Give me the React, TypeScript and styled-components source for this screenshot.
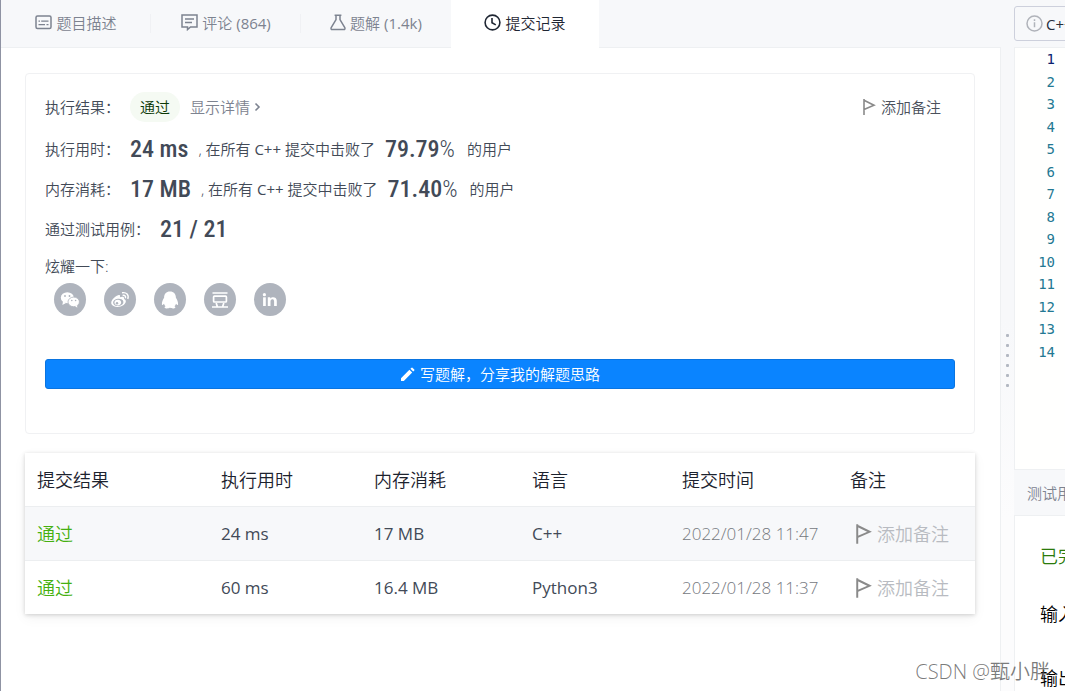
import React from "react";
import styled, { createGlobalStyle } from "styled-components";

const GlobalStyle = createGlobalStyle`
  * { box-sizing: border-box; }
  body {
    margin: 0;
    background: #fff;
    color: #424a57;
    font-family: "Open Sans", "Noto Sans CJK SC", sans-serif;
    font-weight: 350;
    font-size: 15px;
    line-height: 24px;
  }
  button { font: inherit; color: inherit; background: none; border: 0; padding: 0; cursor: pointer; }
  a { color: inherit; text-decoration: none; }
  svg { display: block; flex: none; }
`;

const Page = styled.div`
  position: relative;
  display: flex;
  min-height: 100vh;
  overflow: hidden;
  border-left: 1px solid #8f93a3;
`;

const Main = styled.main`
  flex: 1;
  min-width: 0;
  border-right: 1px solid #eef0f2;
`;

const TabBar = styled.nav`
  display: flex;
  height: 48px;
  margin-right: -1px;
  background: #f7f8fa;
`;

const Tab = styled.button<{ $active?: boolean }>`
  position: relative;
  display: flex;
  align-items: center;
  justify-content: center;
  gap: 4px;
  width: ${(p) => (p.$active ? 148 : 150)}px;
  padding-bottom: 2px;
  color: ${(p) => (p.$active ? "#1f2633" : "#7d8390")};
  background: ${(p) => (p.$active ? "#fff" : "transparent")};
  border-bottom: 1px solid ${(p) => (p.$active ? "#fff" : "#eef0f2")};
`;

const TabDivider = styled.span`
  position: absolute;
  right: 0;
  top: 14px;
  width: 1px;
  height: 19px;
  background: #f0f1f4;
`;

const TabFill = styled.div`
  flex: 1;
  border-bottom: 1px solid #eef0f2;
`;

const Latin = styled.span`
  font-weight: 400;
`;

const Content = styled.div`
  padding: 25px 25px 0 24px;
`;

const ResultCard = styled.section`
  height: 361px;
  padding: 19px;
  border: 1px solid #f0f1f3;
  border-radius: 4px;
`;

const ResultHead = styled.div`
  display: flex;
  align-items: center;
  justify-content: space-between;
  height: 28px;
  margin-bottom: 8px;
  padding-right: 14px;
`;

const Group = styled.div`
  display: flex;
  align-items: center;
`;

const Label = styled.span<{ $wide?: boolean }>`
  width: ${(p) => (p.$wide ? 115 : 85)}px;
  white-space: nowrap;
`;

const Badge = styled.span`
  padding: 3px 10px;
  margin-right: 10px;
  border-radius: 15px;
  background: #f5faf3;
  color: #0b3806;
`;

const DetailLink = styled.a`
  display: flex;
  align-items: center;
  gap: 4px;
  color: #7d8390;
`;

const NoteButton = styled.button<{ $faint?: boolean }>`
  display: flex;
  align-items: center;
  gap: 5px;
  color: ${(p) => (p.$faint ? "#b8bbc1" : "#4b515c")};
  padding-left: ${(p) => (p.$faint ? 6 : 0)}px;
`;

const Stat = styled.div`
  display: flex;
  align-items: center;
  height: 40px;
  white-space: pre;
`;

const Big = styled.strong`
  font-family: "Roboto Condensed", "Roboto", sans-serif;
  font-weight: 500;
  font-size: 24px;
`;

const Percent = styled.span`
  margin-right: 12px;
  font-family: "Roboto Condensed", "Roboto", sans-serif;
  font-weight: 300;
  font-size: 24px;
`;

const Text = styled.span`
  padding: 0 10px;
`;

const ShareTitle = styled.div`
  margin-top: 5px;
`;

const ShareRow = styled.div`
  display: flex;
  gap: 18px;
  padding: 5px 9px 0;
`;

const ShareLink = styled.a`
  display: flex;
  align-items: center;
  justify-content: center;
  width: 32px;
  height: 33px;
  border-radius: 50%;
  background: #afb4bd;
  color: #fff;
`;

const WriteButton = styled.button`
  display: flex;
  align-items: center;
  justify-content: center;
  gap: 5px;
  width: 100%;
  height: 30px;
  margin-top: 43px;
  border: 1px solid #0a74e0;
  border-radius: 3px;
  background: #0a84ff;
  color: #fff;
`;

const Table = styled.table`
  width: 100%;
  margin-top: 19px;
  table-layout: fixed;
  border-collapse: collapse;
  background: #fff;
  box-shadow: 0 1px 4px rgba(0, 0, 0, 0.17), 0 4px 12px rgba(0, 0, 0, 0.05);
  font-size: 18px;
`;

const Row = styled.tr<{ $shaded?: boolean }>`
  height: 54px;
  background: ${(p) => (p.$shaded ? "#f7f8fa" : "#fff")};
  thead & { height: 53px; }
  tbody & { border-top: 1px solid #eceef0; }
`;

const HeadCell = styled.th`
  padding: 2px 12px 0;
  text-align: left;
  font-weight: 350;
  color: #1c222e;
`;

const Cell = styled.td<{ $kind?: "ok" | "time" }>`
  padding: 1px 12px 0;
  white-space: nowrap;
  font-size: ${(p) => (p.$kind === "ok" ? 18 : 17)}px;
  font-weight: ${(p) => (p.$kind ? 350 : 400)};
  color: ${(p) => (p.$kind === "ok" ? "#45b010" : p.$kind === "time" ? "#75787e" : "#424a57")};
  ${NoteButton} { font-size: 18px; font-weight: 350; }
`;

const Splitter = styled.div`
  display: flex;
  flex-direction: column;
  align-items: center;
  width: 13px;
  padding-top: 334px;
  gap: 7px;
  background: linear-gradient(#f7f8fa 320px, #fcfcfd 520px);
`;

const Dot = styled.i`
  width: 3px;
  height: 3px;
  border-radius: 1px;
  background: #b3b8c2;
`;

const Side = styled.aside`
  width: 51px;
  overflow: hidden;
  white-space: nowrap;
  background: #f7f8fa;
  display: flex;
  flex-direction: column;
`;

const LangBar = styled.div`
  height: 47px;
  padding-top: 6px;
`;

const LangButton = styled.button`
  display: flex;
  align-items: center;
  gap: 3px;
  width: 120px;
  height: 35px;
  padding-left: 11px;
  border: 1px solid #cdd0dc;
  border-radius: 3px;
  color: #262d3a;
`;

const Editor = styled.div`
  height: 423px;
  border: solid #eef0f2;
  border-width: 1px 0 1px 1px;
  background: #fffffe;
`;

const Gutter = styled.ol`
  display: grid;
  grid-template-rows: repeat(14, 1fr);
  align-items: center;
  justify-items: end;
  width: 40px;
  height: 315px;
  margin: 0;
  padding: 0;
  list-style: none;
  font-family: "DejaVu Sans Mono", monospace;
  font-size: 14px;
  font-weight: 400;
  line-height: 20px;
`;

const Line = styled.li<{ $current?: boolean }>`
  color: ${(p) => (p.$current ? "#0b216f" : "#237893")};
`;

const CaseTab = styled.button`
  height: 46px;
  padding-left: 13px;
  text-align: left;
  color: #7d8390;
  border-bottom: 1px solid #eef0f2;
`;

const CaseBody = styled.div`
  flex: 1;
  display: flex;
  flex-direction: column;
  gap: 40px;
  border-left: 1px solid #eef0f2;
  padding: 28px 0 0 25px;
  background: #fff;
  font-size: 18px;
`;

const CaseLine = styled.div<{ $status?: boolean }>`
  margin-bottom: ${(p) => (p.$status ? -6 : 0)}px;
  color: ${(p) => (p.$status ? "#2b7a0b" : "#000")};
`;

const Watermark = styled.div`
  position: absolute;
  right: 15px;
  bottom: 7px;
  font-size: 20px;
  color: rgba(80, 80, 80, 0.75);
`;

const Flag = ({ large }: { large?: boolean }) => (
  <svg width={large ? 16 : 13} height={large ? 20 : 16} viewBox="0 0 13 16" fill="none" stroke="#8a8a8a" strokeWidth="1.6">
    <path d="M1 0V16M1 1.3L11 6.2L1 10.6" />
  </svg>
);

const WeChat = () => (
  <svg width="20" height="18" viewBox="0 0 20 18">
    <ellipse cx="7.3" cy="6.7" rx="6.5" ry="5.5" fill="#fff" />
    <path d="M3 10L2.4 14L6 12Z" fill="#fff" />
    <ellipse cx="13.7" cy="10.9" rx="5.7" ry="4.8" fill="#fff" stroke="#afb4bd" strokeWidth=".8" />
    <path d="M15 15L17.3 16.7L17 14Z" fill="#fff" />
    <g fill="#afb4bd"><circle cx="5" cy="5" r=".9" /><circle cx="9.5" cy="5" r=".9" /><circle cx="11.8" cy="9.5" r=".8" /><circle cx="15.6" cy="9.5" r=".8" /></g>
  </svg>
);

const Weibo = () => (
  <svg width="20" height="18" viewBox="0 0 20 18" fill="none">
    <path fill="#fff" d="M8.1 4.2C9.7 3.5 10.5 4.4 9.9 6.2C12.6 5.1 14.7 5.6 14.1 8C16.6 8.9 16.3 12 13.7 14C10.2 16.6 3.7 16.7 1.7 13.6C-.2 10.5 4.1 5.7 8.1 4.2Z" />
    <ellipse cx="8.2" cy="11.4" rx="5.2" ry="3.6" fill="#afb4bd" transform="rotate(-8 8 11)" />
    <ellipse cx="7.8" cy="11.6" rx="3.3" ry="2.8" fill="#fff" />
    <circle cx="7" cy="12.2" r="1.2" fill="#afb4bd" />
    <path d="M12 1.8C16.5 .9 19.2 4 17.8 8M12.6 4.4C15 4 16.1 5.3 15.4 7.2" stroke="#fff" strokeWidth="1.4" />
  </svg>
);

const Penguin = () => (
  <svg width="18" height="18" viewBox="0 0 18 18" fill="#fff">
    <path d="M9 .5C5.2.5 3.1 3 3.1 6.7C1.8 8.8.8 11.2.9 13.5C1.4 14.8 2.5 13.4 3 12.8C3.3 13.9 3.8 14.6 4.6 15.3C3.3 15.8 3 17.4 5.3 17.4C7 17.5 8.3 17.2 9 16.5C9.7 17.2 11 17.5 12.7 17.4C15 17.4 14.7 15.8 13.4 15.3C14.2 14.6 14.7 13.9 15 12.8C15.5 13.4 16.6 14.8 17.1 13.5C17.2 11.2 16.2 8.8 14.9 6.7C14.9 3 12.8.5 9 .5Z" />
  </svg>
);

const Douban = () => (
  <svg width="18" height="18" viewBox="0 0 18 18" fill="none" stroke="#fff" strokeWidth="1.7">
    <path d="M1.5 2H16.5M1 16H17M5.2 12L6.3 15.5M12.8 12L11.7 15.5" />
    <rect x="2.6" y="5.2" width="12.8" height="5.8" rx=".8" />
  </svg>
);

const LinkedIn = () => (
  <svg width="16" height="16" viewBox="0 0 16 16" fill="#fff">
    <circle cx="2.4" cy="2.7" r="1.6" />
    <rect x="1.1" y="5.3" width="2.7" height="8.7" />
    <path d="M5.8 5.3H8.3V6.5C9.8 4.4 14.8 4.5 14.8 8.7V14H12.1V9.4C12.1 6.5 8.5 6.8 8.5 9.4V14H5.8Z" />
  </svg>
);

const columns = [184, 153, 158, 150, 168, 137];
const heads = ["提交结果", "执行用时", "内存消耗", "语言", "提交时间", "备注"];
const rows = [
  { time: "24 ms", memory: "17 MB", lang: "C++", date: "2022/01/28 11:47" },
  { time: "60 ms", memory: "16.4 MB", lang: "Python3", date: "2022/01/28 11:37" },
];
const stats = [
  { label: "执行用时：", value: "24 ms", beats: "79.79" },
  { label: "内存消耗：", value: "17 MB", beats: "71.40" },
];
const shares = [
  { name: "微信", icon: <WeChat /> },
  { name: "微博", icon: <Weibo /> },
  { name: "QQ", icon: <Penguin /> },
  { name: "豆瓣", icon: <Douban /> },
  { name: "LinkedIn", icon: <LinkedIn /> },
];

export default function App() {
  return (
    <>
      <GlobalStyle />
      <Page>
        <Main>
          <TabBar>
            <Tab>
              <svg width="17" height="15" viewBox="0 0 17 15" fill="none" stroke="currentColor" strokeWidth="1.5">
                <rect x="1" y="1" width="15" height="12.5" rx="1.5" />
                <path d="M3.5 6.2H5M6.2 6.2H13.5M3.5 9.6H10M11.5 9.6H13.5" strokeWidth="1.2" />
              </svg>
              题目描述<TabDivider />
            </Tab>
            <Tab>
              <svg width="17" height="17" viewBox="0 0 17 17" fill="none" stroke="currentColor" strokeWidth="1.5">
                <path d="M1 1H16V13H9.5L6.5 15.6V13H1Z" />
                <path d="M4 5H13M4 8.5H11" strokeWidth="1.3" />
              </svg>
              评论 <Latin>(864)</Latin><TabDivider />
            </Tab>
            <Tab>
              <svg width="16" height="17" viewBox="0 0 16 17" fill="none" stroke="currentColor" strokeWidth="1.5" strokeLinejoin="round">
                <path d="M4.6 1.2H11.4M6 1.2V5.6L1.2 13.6Q.5 15.6 2.4 15.6H13.6Q15.5 15.6 14.8 13.6L10 5.6V1.2" />
              </svg>
              题解 <Latin>(1.4k)</Latin>
            </Tab>
            <Tab $active>
              <svg width="17" height="17" viewBox="0 0 17 17" fill="none" stroke="currentColor" strokeWidth="1.6">
                <circle cx="8.5" cy="8.5" r="7.4" />
                <path d="M8 4V8.7L11.8 10.9" />
              </svg>
              提交记录
            </Tab>
            <TabFill />
          </TabBar>
          <Content>
            <ResultCard>
              <ResultHead>
                <Group>
                  <Label>执行结果：</Label>
                  <Badge>通过</Badge>
                  <DetailLink href="#detail">
                    显示详情
                    <svg width="7" height="10" viewBox="0 0 7 10" fill="none" stroke="currentColor" strokeWidth="1.6">
                      <path d="M1.5 1.5L5 5L1.5 8.5" />
                    </svg>
                  </DetailLink>
                </Group>
                <NoteButton><Flag />添加备注</NoteButton>
              </ResultHead>
              {stats.map((s) => (
                <Stat key={s.label}>
                  <Label>{s.label}</Label>
                  <Big>{s.value}</Big>
                  <Text>, 在所有 <Latin>C++</Latin> 提交中击败了</Text>
                  <Big>{s.beats}</Big><Percent>%</Percent>
                  <span>的用户</span>
                </Stat>
              ))}
              <Stat>
                <Label $wide>通过测试用例：</Label>
                <Big>21 / 21</Big>
              </Stat>
              <ShareTitle>炫耀一下:</ShareTitle>
              <ShareRow>
                {shares.map((s) => (
                  <ShareLink key={s.name} href="#share" aria-label={s.name}>{s.icon}</ShareLink>
                ))}
              </ShareRow>
              <WriteButton>
                <svg width="15" height="15" viewBox="0 0 15 15" fill="#fff">
                  <path d="M1 11.2L9.4 2.8L12.2 5.6L3.8 14H1ZM10.4 1.8L11.6.7Q12 .4 12.4.7L14.3 2.6Q14.6 3 14.3 3.4L13.2 4.6Z" />
                </svg>
                写题解，分享我的解题思路
              </WriteButton>
            </ResultCard>
            <Table>
              <colgroup>{columns.map((w, i) => <col key={i} width={w} />)}</colgroup>
              <thead>
                <Row>{heads.map((h) => <HeadCell key={h}>{h}</HeadCell>)}</Row>
              </thead>
              <tbody>
                {rows.map((r, i) => (
                  <Row key={r.date} $shaded={i === 0}>
                    <Cell $kind="ok"><a href="#submission">通过</a></Cell>
                    <Cell>{r.time}</Cell>
                    <Cell>{r.memory}</Cell>
                    <Cell>{r.lang}</Cell>
                    <Cell $kind="time">{r.date}</Cell>
                    <Cell><NoteButton $faint><Flag large />添加备注</NoteButton></Cell>
                  </Row>
                ))}
              </tbody>
            </Table>
          </Content>
        </Main>
        <Splitter>{[0, 1, 2, 3, 4, 5].map((n) => <Dot key={n} />)}</Splitter>
        <Side>
          <LangBar>
            <LangButton>
              <svg width="17" height="17" viewBox="0 0 17 17" fill="none" stroke="#b0b3ba" strokeWidth="1.5">
                <circle cx="8.5" cy="8.5" r="7.5" />
                <path d="M8.5 7.2V12.2M8.5 4.3V6" />
              </svg>
              <Latin>C++</Latin>
            </LangButton>
          </LangBar>
          <Editor>
            <Gutter>
              {Array.from({ length: 14 }, (_, i) => <Line key={i} $current={i === 0}>{i + 1}</Line>)}
            </Gutter>
          </Editor>
          <CaseTab>测试用例</CaseTab>
          <CaseBody>
            <CaseLine $status>已完成</CaseLine>
            <CaseLine>输入</CaseLine>
            <CaseLine>输出</CaseLine>
          </CaseBody>
        </Side>
        <Watermark>CSDN @甄小胖</Watermark>
      </Page>
    </>
  );
}
